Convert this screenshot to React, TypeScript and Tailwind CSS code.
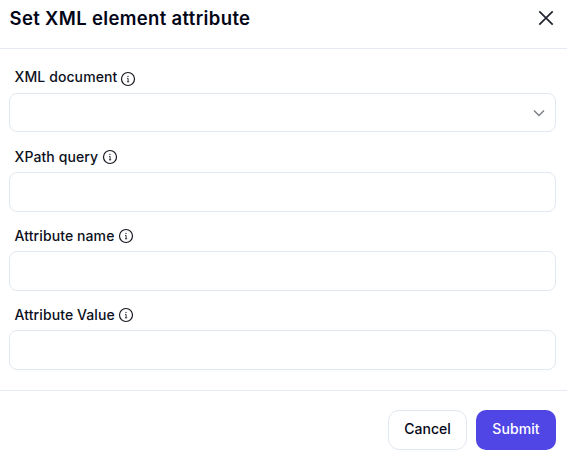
import React from "react";

function InfoIcon({ className = "" }: { className?: string }) {
  return (
    <svg viewBox="0 0 16 16" className={"h-4 w-4 shrink-0 " + className} fill="none" stroke="#16181f" strokeWidth="1.2">
      <circle cx="8" cy="8" r="6.5" />
      <path d="M7.1 7.4h1v3.3M7 10.8h2.2" strokeWidth="0.9" />
      <circle cx="8" cy="5.3" r="0.4" fill="#16181f" strokeWidth="0.5" />
    </svg>
  );
}

function Field({ label, select = false }: { label: string; select?: boolean }) {
  return (
    <div className={"h-[79px] " + (select ? "" : "pt-px")}>
      <div className={"flex h-5 items-center pl-[5.5px] " + (select ? "gap-[2.6px]" : "gap-[3.5px]")}>
        <label className="text-[14px] leading-5 font-medium tracking-[0.1px]">{label}</label>
        <InfoIcon className={select ? "mt-[3px]" : ""} />
      </div>
      <div
        className={
          "flex items-center justify-end rounded-[8px] border border-[#e2e8f0] pr-[10px] " +
          (select ? "mt-[6px] h-[39px]" : "mt-[5px] h-10")
        }
      >
        {select && (
          <svg viewBox="0 0 12 8" className="h-2 w-3" fill="none" stroke="#7b7e86" strokeWidth="1.4">
            <path d="M1 1.5l5 5 5-5" />
          </svg>
        )}
      </div>
    </div>
  );
}

export default function App() {
  return (
    <div className="flex h-[466px] w-[567px] flex-col bg-white font-['Inter',sans-serif] text-[#0c1020]">
      <header className="flex h-[49px] items-start justify-between border-b border-[#e6eaf3] pr-[13px] pl-[9.5px]">
        <h1 className="mt-[4px] text-[18.5px] leading-7 font-semibold tracking-[0.35px] text-[#020617]">
          Set XML element attribute
        </h1>
        <svg viewBox="0 0 16 16" className="mt-[10px] h-4 w-4" fill="none" stroke="#20242f" strokeWidth="1.7">
          <path d="M1.3 1.3l13.4 13.4m0-13.4L1.3 14.7" />
        </svg>
      </header>
      <main className="h-[342px] border-b border-[#e6eaf3] pt-[18px] pr-[11px] pl-[9px]">
        <Field label="XML document" select />
        <Field label="XPath query" />
        <Field label="Attribute name" />
        <Field label="Attribute Value" />
      </main>
      <footer className="flex justify-end gap-[9px] pt-[19px] pr-[11px]">
        <button className="h-10 w-[79px] rounded-[11px] border border-[#e2e8f0] pb-[4px] text-[14px] font-medium text-[#020617]">
          Cancel
        </button>
        <button className="h-10 w-20 rounded-[10px] bg-[#4f46e5] pb-[4px] text-[14px] font-medium tracking-[0.1px] text-white">
          Submit
        </button>
      </footer>
    </div>
  );
}
